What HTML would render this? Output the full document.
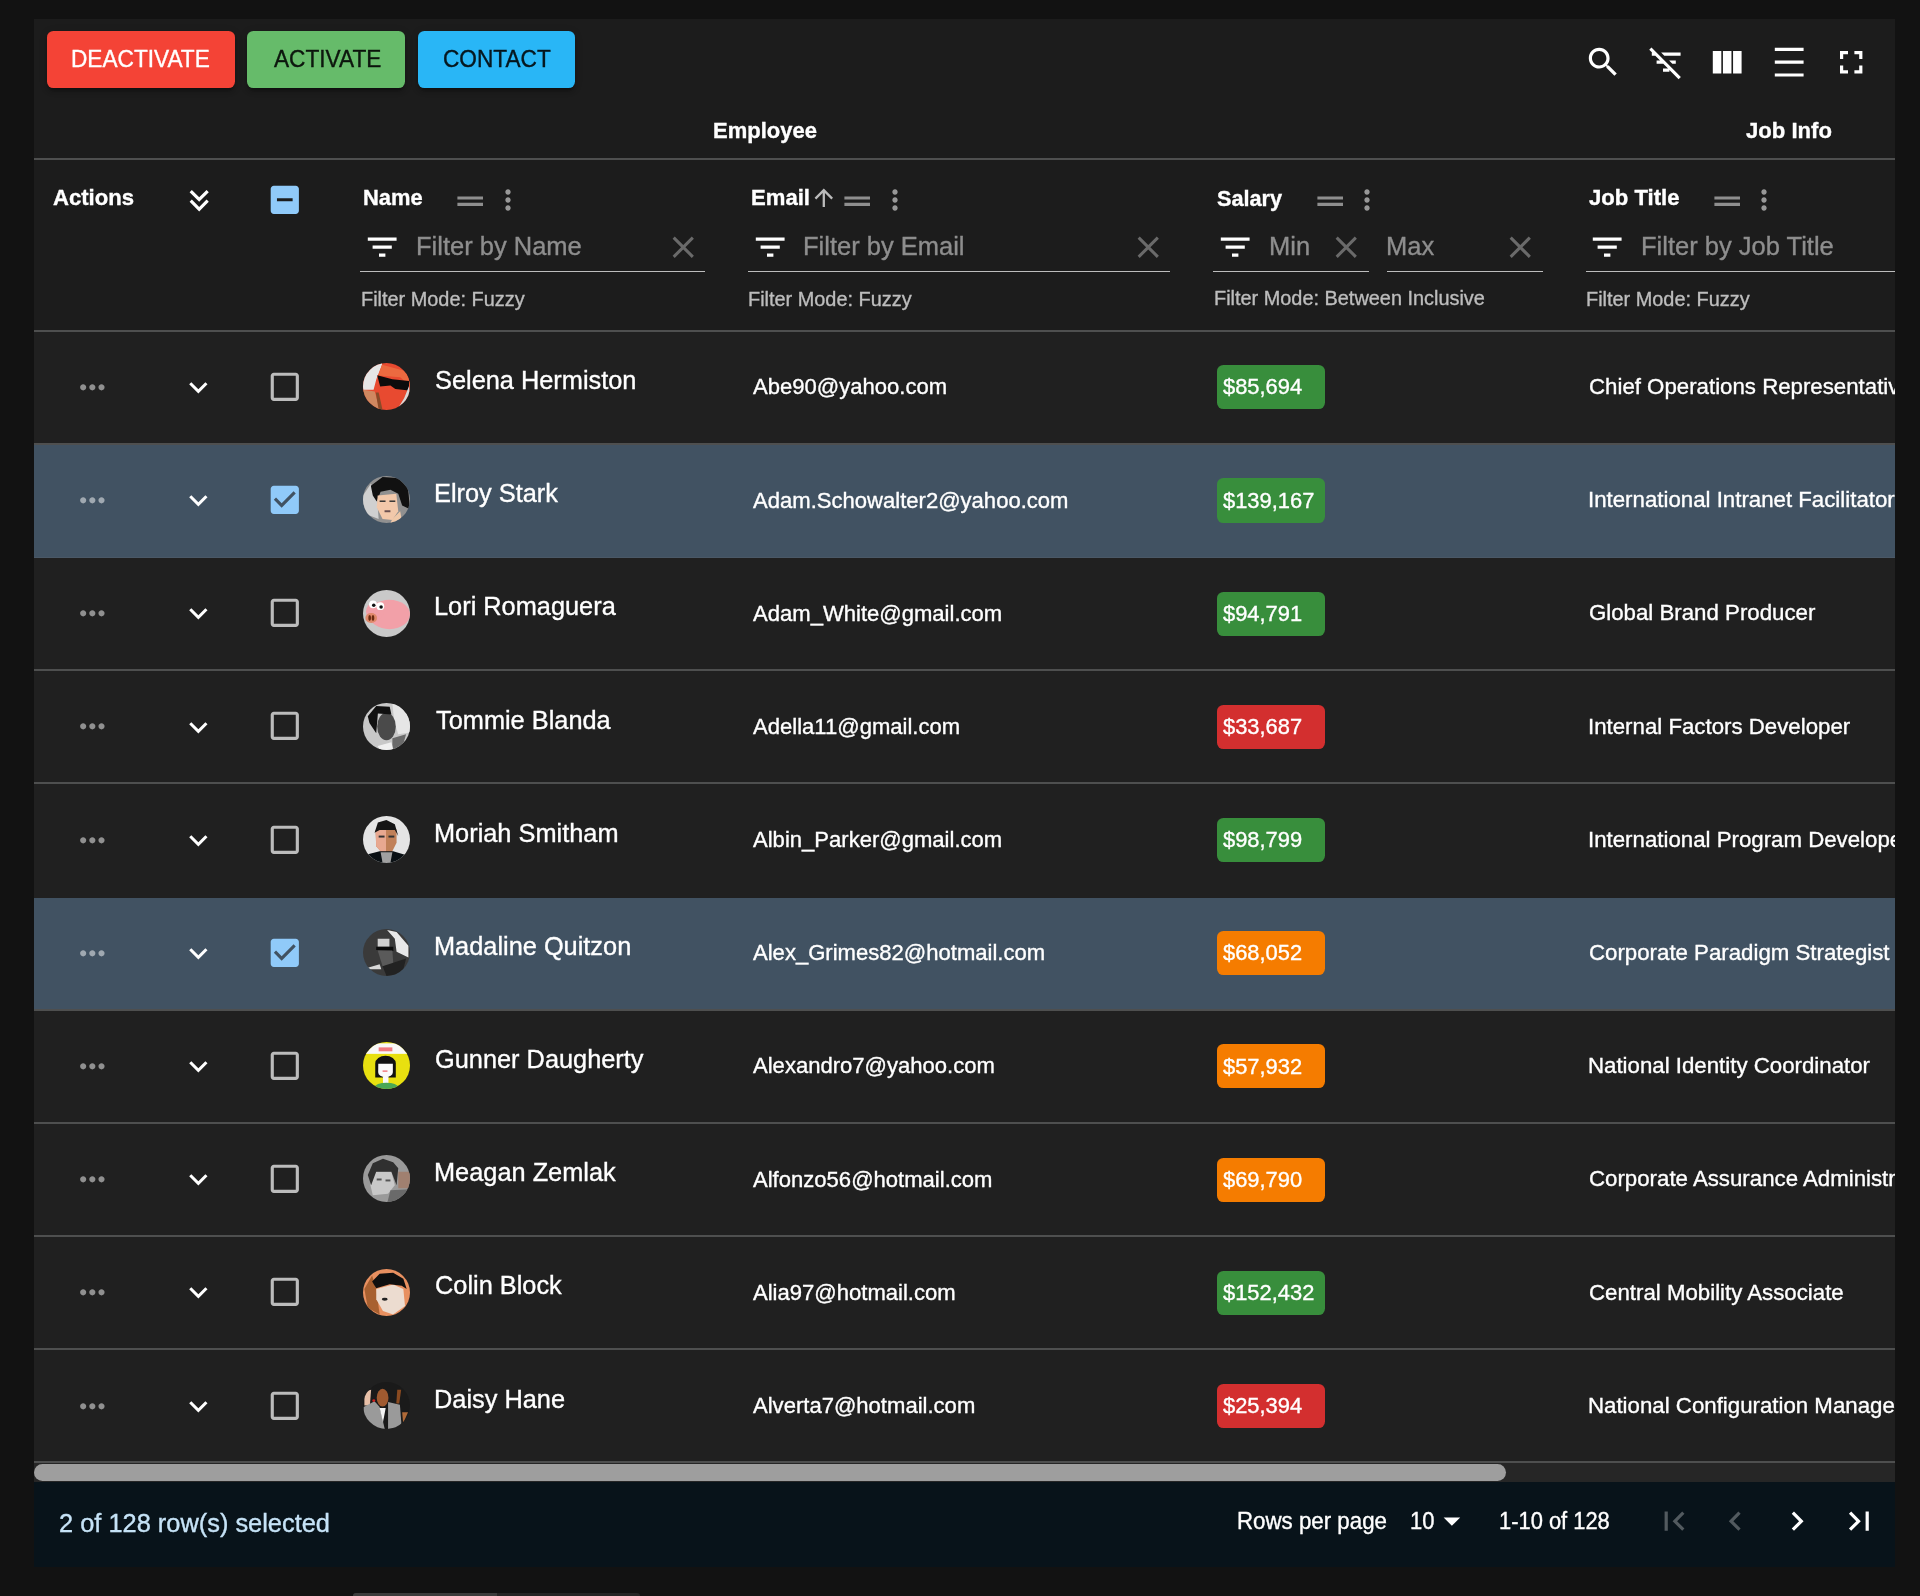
<!DOCTYPE html>
<html><head><meta charset="utf-8"><title>Table</title>
<style>
html,body{margin:0;padding:0;}
body{width:1920px;height:1596px;background:#121212;position:relative;overflow:hidden;font-family:"Liberation Sans",sans-serif;}
#paper{position:absolute;left:34px;top:19px;width:1861px;height:1548px;background:#1c1c1c;overflow:hidden;}
.t{position:absolute;white-space:nowrap;will-change:transform;-webkit-text-stroke:0.35px currentColor;}
.r{position:absolute;}
.i{position:absolute;display:block;overflow:visible;}
#bot{position:absolute;left:353px;top:1593px;width:287px;height:6px;border-radius:4px;background:#252525;overflow:hidden;}
#bot div{position:absolute;left:0;top:0;width:144px;height:6px;background:#3c3c3c;}
</style></head><body>
<div id="paper">
<div class="r" style="left:12.60px;top:12.00px;width:188.40px;height:56.60px;background:#f44336;border-radius:6.4px;box-shadow:0 4.8px 1.6px -3.2px rgba(0,0,0,.2),0 3.2px 3.2px 0 rgba(0,0,0,.14),0 1.6px 8px 0 rgba(0,0,0,.12);"></div>
<div class="t" style="left:37.04px;top:29.13px;font-size:22.65px;line-height:22.65px;color:#fff;transform:scaleY(1.042);transform-origin:0 19.17px;">DEACTIVATE</div>
<div class="r" style="left:212.90px;top:12.00px;width:158.10px;height:56.60px;background:#66bb6a;border-radius:6.4px;box-shadow:0 4.8px 1.6px -3.2px rgba(0,0,0,.2),0 3.2px 3.2px 0 rgba(0,0,0,.14),0 1.6px 8px 0 rgba(0,0,0,.12);"></div>
<div class="t" style="left:239.81px;top:29.13px;font-size:22.65px;line-height:22.65px;color:rgba(0,0,0,0.87);transform:scaleY(1.042);transform-origin:0 19.17px;">ACTIVATE</div>
<div class="r" style="left:384.00px;top:12.00px;width:157.00px;height:56.60px;background:#29b6f6;border-radius:6.4px;box-shadow:0 4.8px 1.6px -3.2px rgba(0,0,0,.2),0 3.2px 3.2px 0 rgba(0,0,0,.14),0 1.6px 8px 0 rgba(0,0,0,.12);"></div>
<div class="t" style="left:408.75px;top:29.13px;font-size:22.65px;line-height:22.65px;color:rgba(0,0,0,0.87);transform:scaleY(1.042);transform-origin:0 19.17px;">CONTACT</div>
<svg class="i" style="left:1550.40px;top:23.70px;width:38.40px;height:38.40px;" viewBox="0 0 24 24"><path fill="#fff" d="M15.5 14h-.79l-.28-.27C15.41 12.59 16 11.11 16 9.5 16 5.91 13.09 3 9.5 3S3 5.91 3 9.5 5.91 16 9.5 16c1.61 0 3.09-.59 4.23-1.57l.27.28v.79l5 4.99L20.49 19l-4.99-5zm-6 0C7.01 14 5 11.99 5 9.5S7.01 5 9.5 5 14 7.01 14 9.5 11.99 14 9.5 14z"/></svg>
<svg class="i" style="left:1612.80px;top:23.70px;width:38.40px;height:38.40px;" viewBox="0 0 24 24"><path fill="#fff" d="M10.83 8H21V6H8.83l2 2zm5 5H18v-2h-4.17l2 2zM14 16.83V18h-4v-2h3.17l-3-3H6v-2h2.17l-3-3H3V6h.17L1.39 4.22 2.8 2.81l18.38 18.38-1.41 1.41L14 16.83z"/></svg>
<svg class="i" style="left:1674.20px;top:23.70px;width:38.40px;height:38.40px;" viewBox="0 0 24 24"><path fill="#fff" d="M14.67 5v14H9.33V5h5.34zm1 14H21V5h-5.33v14zm-7.34 0V5H3v14h5.33z"/></svg>
<svg class="i" style="left:1736.20px;top:23.70px;width:38.40px;height:38.40px;" viewBox="0 0 24 24"><path fill="#fff" d="M3 3h18v2H3zm0 16h18v2H3zm0-8h18v2H3z"/></svg>
<svg class="i" style="left:1798.30px;top:23.70px;width:38.40px;height:38.40px;" viewBox="0 0 24 24"><path fill="#fff" d="M7 14H5v5h5v-2H7v-3zm-2-4h2V7h3V5H5v5zm12 7h-3v2h5v-5h-2v3zM14 5v2h3v3h2V5h-5z"/></svg>
<div class="t" style="left:679.03px;top:101.38px;font-size:22.0px;line-height:22.0px;color:#fff;font-weight:700;transform:scaleY(1.03);transform-origin:0 18.62px;">Employee</div>
<div class="t" style="left:1712.17px;top:101.19px;font-size:22.1px;line-height:22.1px;color:#fff;font-weight:700;transform:scaleY(1.03);transform-origin:0 18.71px;">Job Info</div>
<div class="r" style="left:0.00px;top:139.40px;width:1861.00px;height:1.80px;background:#4e4f4f;"></div>
<div class="t" style="left:18.85px;top:168.19px;font-size:22.1px;line-height:22.1px;color:#fff;font-weight:700;transform:scaleY(1.03);transform-origin:0 18.71px;">Actions</div>
<svg class="i" style="left:145.50px;top:162.50px;width:38.40px;height:38.40px;" viewBox="0 0 24 24"><path fill="#fff" d="M18 6.41 16.59 5 12 9.58 7.41 5 6 6.41l6 6z M18 12.41 16.59 11 12 15.58 7.41 11 6 12.41l6 6z"/></svg>
<svg class="i" style="left:231.85px;top:162.40px;width:37.60px;height:37.60px;" viewBox="0 0 24 24"><path fill="#90caf9" d="M19 3H5c-1.1 0-2 .9-2 2v14c0 1.1.9 2 2 2h14c1.1 0 2-.9 2-2V5c0-1.1-.9-2-2-2zm-2 10H7v-2h10v2z"/></svg>
<div class="t" style="left:329.44px;top:168.46px;font-size:21.9px;line-height:21.9px;color:#fff;font-weight:700;transform:scaleY(1.03);transform-origin:0 18.54px;">Name</div>
<svg class="i" style="left:417.40px;top:162.70px;width:38.40px;height:38.40px;" viewBox="0 0 24 24"><path fill="rgba(255,255,255,0.5)" d="M20 9H4v2h16V9zM4 15h16v-2H4v2z"/></svg>
<svg class="i" style="left:457.80px;top:165.30px;width:32.00px;height:32.00px;" viewBox="0 0 24 24"><path fill="rgba(255,255,255,0.55)" d="M12 8c1.1 0 2-.9 2-2s-.9-2-2-2-2 .9-2 2 .9 2 2 2zm0 2c-1.1 0-2 .9-2 2s.9 2 2 2 2-.9 2-2-.9-2-2-2zm0 6c-1.1 0-2 .9-2 2s.9 2 2 2 2-.9 2-2-.9-2-2-2z"/></svg>
<div class="t" style="left:717.12px;top:168.29px;font-size:22.1px;line-height:22.1px;color:#fff;font-weight:700;transform:scaleY(1.03);transform-origin:0 18.71px;">Email</div>
<svg class="i" style="left:776.40px;top:165.00px;width:27.60px;height:27.60px;" viewBox="0 0 24 24"><path fill="rgba(255,255,255,0.7)" d="M4 12l1.41 1.41L11 7.83V20h2V7.83l5.58 5.59L20 12l-8-8-8 8z"/></svg>
<svg class="i" style="left:803.80px;top:162.70px;width:38.40px;height:38.40px;" viewBox="0 0 24 24"><path fill="rgba(255,255,255,0.5)" d="M20 9H4v2h16V9zM4 15h16v-2H4v2z"/></svg>
<svg class="i" style="left:844.90px;top:165.30px;width:32.00px;height:32.00px;" viewBox="0 0 24 24"><path fill="rgba(255,255,255,0.55)" d="M12 8c1.1 0 2-.9 2-2s-.9-2-2-2-2 .9-2 2 .9 2 2 2zm0 2c-1.1 0-2 .9-2 2s.9 2 2 2 2-.9 2-2-.9-2-2-2zm0 6c-1.1 0-2 .9-2 2s.9 2 2 2 2-.9 2-2-.9-2-2-2z"/></svg>
<div class="t" style="left:1182.87px;top:168.63px;font-size:21.7px;line-height:21.7px;color:#fff;font-weight:700;transform:scaleY(1.03);transform-origin:0 18.37px;">Salary</div>
<svg class="i" style="left:1277.30px;top:162.70px;width:38.40px;height:38.40px;" viewBox="0 0 24 24"><path fill="rgba(255,255,255,0.5)" d="M20 9H4v2h16V9zM4 15h16v-2H4v2z"/></svg>
<svg class="i" style="left:1317.20px;top:165.30px;width:32.00px;height:32.00px;" viewBox="0 0 24 24"><path fill="rgba(255,255,255,0.55)" d="M12 8c1.1 0 2-.9 2-2s-.9-2-2-2-2 .9-2 2 .9 2 2 2zm0 2c-1.1 0-2 .9-2 2s.9 2 2 2 2-.9 2-2-.9-2-2-2zm0 6c-1.1 0-2 .9-2 2s.9 2 2 2 2-.9 2-2-.9-2-2-2z"/></svg>
<div class="t" style="left:1555.17px;top:168.29px;font-size:22.1px;line-height:22.1px;color:#fff;font-weight:700;transform:scaleY(1.03);transform-origin:0 18.71px;">Job Title</div>
<svg class="i" style="left:1673.60px;top:162.70px;width:38.40px;height:38.40px;" viewBox="0 0 24 24"><path fill="rgba(255,255,255,0.5)" d="M20 9H4v2h16V9zM4 15h16v-2H4v2z"/></svg>
<svg class="i" style="left:1714.20px;top:165.30px;width:32.00px;height:32.00px;" viewBox="0 0 24 24"><path fill="rgba(255,255,255,0.55)" d="M12 8c1.1 0 2-.9 2-2s-.9-2-2-2-2 .9-2 2 .9 2 2 2zm0 2c-1.1 0-2 .9-2 2s.9 2 2 2 2-.9 2-2-.9-2-2-2zm0 6c-1.1 0-2 .9-2 2s.9 2 2 2 2-.9 2-2-.9-2-2-2z"/></svg>
<svg class="i" style="left:329.30px;top:209.30px;width:38.40px;height:38.40px;" viewBox="0 0 24 24"><path fill="#fff" d="M10 18h4v-2h-4v2zM3 6v2h18V6H3zm3 7h12v-2H6v2z"/></svg>
<svg class="i" style="left:717.20px;top:209.30px;width:38.40px;height:38.40px;" viewBox="0 0 24 24"><path fill="#fff" d="M10 18h4v-2h-4v2zM3 6v2h18V6H3zm3 7h12v-2H6v2z"/></svg>
<svg class="i" style="left:1182.00px;top:209.30px;width:38.40px;height:38.40px;" viewBox="0 0 24 24"><path fill="#fff" d="M10 18h4v-2h-4v2zM3 6v2h18V6H3zm3 7h12v-2H6v2z"/></svg>
<svg class="i" style="left:1554.40px;top:209.30px;width:38.40px;height:38.40px;" viewBox="0 0 24 24"><path fill="#fff" d="M10 18h4v-2h-4v2zM3 6v2h18V6H3zm3 7h12v-2H6v2z"/></svg>
<div class="t" style="left:381.71px;top:214.51px;font-size:25.5px;line-height:25.5px;color:#8e8e8e;transform:scaleY(1.042);transform-origin:0 21.59px;">Filter by Name</div>
<div class="t" style="left:768.71px;top:214.51px;font-size:25.5px;line-height:25.5px;color:#8e8e8e;transform:scaleY(1.042);transform-origin:0 21.59px;">Filter by Email</div>
<div class="t" style="left:1234.51px;top:214.51px;font-size:25.5px;line-height:25.5px;color:#8e8e8e;transform:scaleY(1.042);transform-origin:0 21.59px;">Min</div>
<div class="t" style="left:1352.21px;top:214.51px;font-size:25.5px;line-height:25.5px;color:#8e8e8e;transform:scaleY(1.042);transform-origin:0 21.59px;">Max</div>
<div class="t" style="left:1606.71px;top:214.51px;font-size:25.5px;line-height:25.5px;color:#8e8e8e;transform:scaleY(1.042);transform-origin:0 21.59px;">Filter by Job Title</div>
<svg class="i" style="left:630.85px;top:210.00px;width:36.50px;height:36.50px;" viewBox="0 0 24 24"><path fill="#6a6a6a" d="M19 6.41 17.59 5 12 10.59 6.41 5 5 6.41 10.59 12 5 17.59 6.41 19 12 13.41 17.59 19 19 17.59 13.41 12z"/></svg>
<svg class="i" style="left:1096.15px;top:210.00px;width:36.50px;height:36.50px;" viewBox="0 0 24 24"><path fill="#6a6a6a" d="M19 6.41 17.59 5 12 10.59 6.41 5 5 6.41 10.59 12 5 17.59 6.41 19 12 13.41 17.59 19 19 17.59 13.41 12z"/></svg>
<svg class="i" style="left:1294.20px;top:210.00px;width:36.50px;height:36.50px;" viewBox="0 0 24 24"><path fill="#6a6a6a" d="M19 6.41 17.59 5 12 10.59 6.41 5 5 6.41 10.59 12 5 17.59 6.41 19 12 13.41 17.59 19 19 17.59 13.41 12z"/></svg>
<svg class="i" style="left:1468.35px;top:210.00px;width:36.50px;height:36.50px;" viewBox="0 0 24 24"><path fill="#6a6a6a" d="M19 6.41 17.59 5 12 10.59 6.41 5 5 6.41 10.59 12 5 17.59 6.41 19 12 13.41 17.59 19 19 17.59 13.41 12z"/></svg>
<div class="r" style="left:325.80px;top:251.60px;width:345.40px;height:1.80px;background:#bdbdbd;"></div>
<div class="r" style="left:714.20px;top:251.60px;width:422.00px;height:1.80px;background:#bdbdbd;"></div>
<div class="r" style="left:1179.00px;top:251.60px;width:155.75px;height:1.80px;background:#bdbdbd;"></div>
<div class="r" style="left:1353.20px;top:251.60px;width:155.70px;height:1.80px;background:#bdbdbd;"></div>
<div class="r" style="left:1551.50px;top:251.60px;width:314.50px;height:1.80px;background:#bdbdbd;"></div>
<div class="t" style="left:326.77px;top:270.55px;font-size:19.9px;line-height:19.9px;color:#bdbdbd;transform:scaleY(1.042);transform-origin:0 16.85px;">Filter Mode: Fuzzy</div>
<div class="t" style="left:714.17px;top:270.55px;font-size:19.9px;line-height:19.9px;color:#bdbdbd;transform:scaleY(1.042);transform-origin:0 16.85px;">Filter Mode: Fuzzy</div>
<div class="t" style="left:1180.17px;top:270.35px;font-size:19.9px;line-height:19.9px;color:#bdbdbd;transform:scaleY(1.042);transform-origin:0 16.85px;">Filter Mode: Between Inclusive</div>
<div class="t" style="left:1552.27px;top:270.55px;font-size:19.9px;line-height:19.9px;color:#bdbdbd;transform:scaleY(1.042);transform-origin:0 16.85px;">Filter Mode: Fuzzy</div>
<div class="r" style="left:0.00px;top:311.00px;width:1861.00px;height:1132.30px;background:#202020;"></div>
<div class="r" style="left:0.00px;top:310.70px;width:1861.00px;height:2.10px;background:#4e4f4f;"></div>
<div class="r" style="left:0.00px;top:423.60px;width:1861.00px;height:2.20px;background:#4e4f4f;"></div>
<svg class="i" style="left:40.15px;top:349.95px;width:36.70px;height:36.70px;" viewBox="0 0 24 24"><path fill="rgba(255,255,255,0.5)" d="M6 10c-1.1 0-2 .9-2 2s.9 2 2 2 2-.9 2-2-.9-2-2-2zm12 0c-1.1 0-2 .9-2 2s.9 2 2 2 2-.9 2-2-.9-2-2-2zm-6 0c-1.1 0-2 .9-2 2s.9 2 2 2 2-.9 2-2-.9-2-2-2z"/></svg>
<svg class="i" style="left:146.15px;top:350.05px;width:36.70px;height:36.70px;" viewBox="0 0 24 24"><path fill="#fff" d="M16.59 8.59 12 13.17 7.41 8.59 6 10l6 6 6-6z"/></svg>
<svg class="i" style="left:232.10px;top:348.90px;width:37.60px;height:37.60px;" viewBox="0 0 24 24"><path fill="rgba(255,255,255,0.7)" d="M19 5v14H5V5h14m0-2H5c-1.11 0-2 .9-2 2v14c0 1.1.89 2 2 2h14c1.1 0 2-.9 2-2V5c0-1.1-.9-2-2-2z"/></svg>
<svg class="i" style="left:329.20px;top:344.20px;width:47.0px;height:47.0px" viewBox="0 0 48 48"><defs><clipPath id="c0"><circle cx="24" cy="24" r="24"/></clipPath></defs><g clip-path="url(#c0)"><rect width="48" height="48" fill="#e84a30"/><polygon points="19.4,-1 0,-1 0,27.2 10.8,27.2 13.7,16.3 19.4,1.8" fill="#e6e6e6"/><polygon points="0,27.2 12,29 17.5,48 0,48" fill="#d08860"/><polygon points="13,30 16,30 20,48 16,48" fill="#8a4a28"/><polygon points="19.4,1.8 46,9 48,23.5 38,14.5 15.6,12.7" fill="#ec6a40"/><polygon points="14.5,12.5 30,16.5 47,18.5 47,28 33,26.5 28,23 17.5,24" fill="#0c0c0c"/><polygon points="47,23.5 48,32.6 48,48 36.5,45 42,36" fill="#d8d8d8"/></g></svg>
<div class="t" style="left:400.95px;top:349.04px;font-size:25.35px;line-height:25.35px;color:#fff;transform:scaleY(1.042);transform-origin:0 21.46px;">Selena Hermiston</div>
<div class="t" style="left:719.06px;top:357.32px;font-size:22.07px;line-height:22.07px;color:#fff;transform:scaleY(1.03);transform-origin:0 18.68px;">Abe90@yahoo.com</div>
<div class="r" style="left:1183.00px;top:346.25px;width:108.20px;height:44.10px;background:#388e3c;border-radius:6.4px;"></div>
<div class="t" style="left:1189.26px;top:357.46px;font-size:21.9px;line-height:21.9px;color:#fff;transform:scaleY(1.03);transform-origin:0 18.54px;">$85,694</div>
<div class="t" style="left:1554.67px;top:357.07px;font-size:22.25px;line-height:22.25px;color:#fff;transform:scaleY(1.03);transform-origin:0 18.83px;white-space:nowrap;">Chief Operations Representative</div>
<div class="r" style="left:0.00px;top:425.98px;width:1861.00px;height:113.00px;background:#415262;"></div>
<div class="r" style="left:0.00px;top:537.78px;width:1861.00px;height:1.20px;background:#4a5866;"></div>
<svg class="i" style="left:40.15px;top:463.13px;width:36.70px;height:36.70px;" viewBox="0 0 24 24"><path fill="rgba(255,255,255,0.5)" d="M6 10c-1.1 0-2 .9-2 2s.9 2 2 2 2-.9 2-2-.9-2-2-2zm12 0c-1.1 0-2 .9-2 2s.9 2 2 2 2-.9 2-2-.9-2-2-2zm-6 0c-1.1 0-2 .9-2 2s.9 2 2 2 2-.9 2-2-.9-2-2-2z"/></svg>
<svg class="i" style="left:146.15px;top:463.23px;width:36.70px;height:36.70px;" viewBox="0 0 24 24"><path fill="#fff" d="M16.59 8.59 12 13.17 7.41 8.59 6 10l6 6 6-6z"/></svg>
<svg class="i" style="left:232.10px;top:462.08px;width:37.60px;height:37.60px;" viewBox="0 0 24 24"><path fill="#90caf9" d="M19 3H5c-1.11 0-2 .9-2 2v14c0 1.1.89 2 2 2h14c1.11 0 2-.9 2-2V5c0-1.1-.89-2-2-2zm-9 14l-5-5 1.41-1.41L10 14.17l7.59-7.59L19 8l-9 9z"/></svg>
<svg class="i" style="left:329.20px;top:457.38px;width:47.0px;height:47.0px" viewBox="0 0 48 48"><defs><clipPath id="c1"><circle cx="24" cy="24" r="24"/></clipPath></defs><g clip-path="url(#c1)"><rect width="48" height="48" fill="#909090"/><polygon points="0,20 8,8 14,18 16,44 6,40 0,36" fill="#d0d0d0"/><polygon points="8,10 20,1 36,2 46,12 48,34 40,30 36,18 28,14 18,16 14,26 10,20" fill="#111"/><polygon points="15,20 34,18 36,36 30,45 20,44 14,32" fill="#f2c8aa"/><rect x="17" y="25" width="6" height="1.5" fill="#333"/><rect x="27" y="25" width="6" height="1.5" fill="#333"/><rect x="22" y="35" width="6" height="2" fill="#6a5050"/><polygon points="30,44 38,36 40,48 28,48" fill="#f0c8a8"/></g></svg>
<div class="t" style="left:400.02px;top:462.22px;font-size:25.35px;line-height:25.35px;color:#fff;transform:scaleY(1.042);transform-origin:0 21.46px;">Elroy Stark</div>
<div class="t" style="left:719.06px;top:470.50px;font-size:22.07px;line-height:22.07px;color:#fff;transform:scaleY(1.03);transform-origin:0 18.68px;">Adam.Schowalter2@yahoo.com</div>
<div class="r" style="left:1183.00px;top:459.43px;width:108.20px;height:44.10px;background:#388e3c;border-radius:6.4px;"></div>
<div class="t" style="left:1189.26px;top:470.64px;font-size:21.9px;line-height:21.9px;color:#fff;transform:scaleY(1.03);transform-origin:0 18.54px;">$139,167</div>
<div class="t" style="left:1553.75px;top:470.25px;font-size:22.25px;line-height:22.25px;color:#fff;transform:scaleY(1.03);transform-origin:0 18.83px;white-space:nowrap;">International Intranet Facilitator</div>
<div class="r" style="left:0.00px;top:649.96px;width:1861.00px;height:2.20px;background:#4e4f4f;"></div>
<svg class="i" style="left:40.15px;top:576.31px;width:36.70px;height:36.70px;" viewBox="0 0 24 24"><path fill="rgba(255,255,255,0.5)" d="M6 10c-1.1 0-2 .9-2 2s.9 2 2 2 2-.9 2-2-.9-2-2-2zm12 0c-1.1 0-2 .9-2 2s.9 2 2 2 2-.9 2-2-.9-2-2-2zm-6 0c-1.1 0-2 .9-2 2s.9 2 2 2 2-.9 2-2-.9-2-2-2z"/></svg>
<svg class="i" style="left:146.15px;top:576.41px;width:36.70px;height:36.70px;" viewBox="0 0 24 24"><path fill="#fff" d="M16.59 8.59 12 13.17 7.41 8.59 6 10l6 6 6-6z"/></svg>
<svg class="i" style="left:232.10px;top:575.26px;width:37.60px;height:37.60px;" viewBox="0 0 24 24"><path fill="rgba(255,255,255,0.7)" d="M19 5v14H5V5h14m0-2H5c-1.11 0-2 .9-2 2v14c0 1.1.89 2 2 2h14c1.1 0 2-.9 2-2V5c0-1.1-.9-2-2-2z"/></svg>
<svg class="i" style="left:329.20px;top:570.56px;width:47.0px;height:47.0px" viewBox="0 0 48 48"><defs><clipPath id="c2"><circle cx="24" cy="24" r="24"/></clipPath></defs><g clip-path="url(#c2)"><rect width="48" height="48" fill="#c9c9c9"/><ellipse cx="27" cy="25" rx="21" ry="15" fill="#f2a0a8"/><ellipse cx="12" cy="22" rx="9" ry="9" fill="#f2a0a8"/><ellipse cx="8.4" cy="28.6" rx="6" ry="5" fill="#e0886a"/><ellipse cx="6.8" cy="28.6" rx="1.4" ry="3" fill="#6a2a10"/><ellipse cx="10.2" cy="28.6" rx="1.4" ry="3" fill="#6a2a10"/><circle cx="10.2" cy="14.6" r="4" fill="#fff"/><circle cx="17.7" cy="16.5" r="4" fill="#fff"/><circle cx="11" cy="15.5" r="1.8" fill="#111"/><circle cx="18.5" cy="17.4" r="1.8" fill="#111"/></g></svg>
<div class="t" style="left:400.02px;top:575.40px;font-size:25.35px;line-height:25.35px;color:#fff;transform:scaleY(1.042);transform-origin:0 21.46px;">Lori Romaguera</div>
<div class="t" style="left:719.06px;top:583.68px;font-size:22.07px;line-height:22.07px;color:#fff;transform:scaleY(1.03);transform-origin:0 18.68px;">Adam_White@gmail.com</div>
<div class="r" style="left:1183.00px;top:572.61px;width:108.20px;height:44.10px;background:#388e3c;border-radius:6.4px;"></div>
<div class="t" style="left:1189.26px;top:583.82px;font-size:21.9px;line-height:21.9px;color:#fff;transform:scaleY(1.03);transform-origin:0 18.54px;">$94,791</div>
<div class="t" style="left:1554.68px;top:583.43px;font-size:22.25px;line-height:22.25px;color:#fff;transform:scaleY(1.03);transform-origin:0 18.83px;white-space:nowrap;">Global Brand Producer</div>
<div class="r" style="left:0.00px;top:763.14px;width:1861.00px;height:2.20px;background:#4e4f4f;"></div>
<svg class="i" style="left:40.15px;top:689.49px;width:36.70px;height:36.70px;" viewBox="0 0 24 24"><path fill="rgba(255,255,255,0.5)" d="M6 10c-1.1 0-2 .9-2 2s.9 2 2 2 2-.9 2-2-.9-2-2-2zm12 0c-1.1 0-2 .9-2 2s.9 2 2 2 2-.9 2-2-.9-2-2-2zm-6 0c-1.1 0-2 .9-2 2s.9 2 2 2 2-.9 2-2-.9-2-2-2z"/></svg>
<svg class="i" style="left:146.15px;top:689.59px;width:36.70px;height:36.70px;" viewBox="0 0 24 24"><path fill="#fff" d="M16.59 8.59 12 13.17 7.41 8.59 6 10l6 6 6-6z"/></svg>
<svg class="i" style="left:232.10px;top:688.44px;width:37.60px;height:37.60px;" viewBox="0 0 24 24"><path fill="rgba(255,255,255,0.7)" d="M19 5v14H5V5h14m0-2H5c-1.11 0-2 .9-2 2v14c0 1.1.89 2 2 2h14c1.1 0 2-.9 2-2V5c0-1.1-.9-2-2-2z"/></svg>
<svg class="i" style="left:329.20px;top:683.74px;width:47.0px;height:47.0px" viewBox="0 0 48 48"><defs><clipPath id="c3"><circle cx="24" cy="24" r="24"/></clipPath></defs><g clip-path="url(#c3)"><rect width="48" height="48" fill="#c8c8c8"/><polygon points="30,0 48,0 48,30 36,32 32,20" fill="#e6e6e6"/><ellipse cx="24" cy="24" rx="9.5" ry="14" fill="#4a4a4a"/><polygon points="4.9,13.5 13.5,3.1 27.3,3.8 29,11.8 15.2,10.7 13.5,30.8 6.6,20.4" fill="#101010"/><polygon points="30,36 44,32 40,46 30,48" fill="#6a6a6a"/><polygon points="15,44 29,40 31,48 17,48" fill="#f0f0f0"/></g></svg>
<div class="t" style="left:401.53px;top:688.58px;font-size:25.35px;line-height:25.35px;color:#fff;transform:scaleY(1.042);transform-origin:0 21.46px;">Tommie Blanda</div>
<div class="t" style="left:719.06px;top:696.86px;font-size:22.07px;line-height:22.07px;color:#fff;transform:scaleY(1.03);transform-origin:0 18.68px;">Adella11@gmail.com</div>
<div class="r" style="left:1183.00px;top:685.79px;width:108.20px;height:44.10px;background:#d32f2f;border-radius:6.4px;"></div>
<div class="t" style="left:1189.26px;top:697.00px;font-size:21.9px;line-height:21.9px;color:#fff;transform:scaleY(1.03);transform-origin:0 18.54px;">$33,687</div>
<div class="t" style="left:1553.75px;top:696.61px;font-size:22.25px;line-height:22.25px;color:#fff;transform:scaleY(1.03);transform-origin:0 18.83px;white-space:nowrap;">Internal Factors Developer</div>
<svg class="i" style="left:40.15px;top:802.67px;width:36.70px;height:36.70px;" viewBox="0 0 24 24"><path fill="rgba(255,255,255,0.5)" d="M6 10c-1.1 0-2 .9-2 2s.9 2 2 2 2-.9 2-2-.9-2-2-2zm12 0c-1.1 0-2 .9-2 2s.9 2 2 2 2-.9 2-2-.9-2-2-2zm-6 0c-1.1 0-2 .9-2 2s.9 2 2 2 2-.9 2-2-.9-2-2-2z"/></svg>
<svg class="i" style="left:146.15px;top:802.77px;width:36.70px;height:36.70px;" viewBox="0 0 24 24"><path fill="#fff" d="M16.59 8.59 12 13.17 7.41 8.59 6 10l6 6 6-6z"/></svg>
<svg class="i" style="left:232.10px;top:801.62px;width:37.60px;height:37.60px;" viewBox="0 0 24 24"><path fill="rgba(255,255,255,0.7)" d="M19 5v14H5V5h14m0-2H5c-1.11 0-2 .9-2 2v14c0 1.1.89 2 2 2h14c1.1 0 2-.9 2-2V5c0-1.1-.9-2-2-2z"/></svg>
<svg class="i" style="left:329.20px;top:796.92px;width:47.0px;height:47.0px" viewBox="0 0 48 48"><defs><clipPath id="c4"><circle cx="24" cy="24" r="24"/></clipPath></defs><g clip-path="url(#c4)"><rect width="48" height="48" fill="#e4e4e4"/><polygon points="12.8,14.2 34.3,13.5 34.3,27.3 29,37.7 20.4,38.8 13.5,30.8" fill="#c08058"/><polygon points="12.8,14.2 23.5,14 23.5,38.5 20.4,38.8 13.5,30.8" fill="#e8a890"/><polygon points="11.8,17 15.2,6.6 23.9,4.2 32.5,8.3 36,20.4 32.5,14.2 17,14.2" fill="#151515"/><rect x="16" y="20" width="6" height="2" fill="#333"/><rect x="26" y="20" width="6" height="2" fill="#333"/><polygon points="-4,48 3.1,39.5 17,36 30.8,36 42.9,39.5 48,48" fill="#0a1014"/><polygon points="18,37 30,37 28,48 20,48" fill="#a0a0a0"/></g></svg>
<div class="t" style="left:400.02px;top:801.76px;font-size:25.35px;line-height:25.35px;color:#fff;transform:scaleY(1.042);transform-origin:0 21.46px;">Moriah Smitham</div>
<div class="t" style="left:719.06px;top:810.04px;font-size:22.07px;line-height:22.07px;color:#fff;transform:scaleY(1.03);transform-origin:0 18.68px;">Albin_Parker@gmail.com</div>
<div class="r" style="left:1183.00px;top:798.97px;width:108.20px;height:44.10px;background:#388e3c;border-radius:6.4px;"></div>
<div class="t" style="left:1189.26px;top:810.18px;font-size:21.9px;line-height:21.9px;color:#fff;transform:scaleY(1.03);transform-origin:0 18.54px;">$98,799</div>
<div class="t" style="left:1553.75px;top:809.79px;font-size:22.25px;line-height:22.25px;color:#fff;transform:scaleY(1.03);transform-origin:0 18.83px;white-space:nowrap;">International Program Developer</div>
<div class="r" style="left:0.00px;top:878.70px;width:1861.00px;height:113.00px;background:#415262;"></div>
<div class="r" style="left:0.00px;top:989.50px;width:1861.00px;height:2.20px;background:#4e4f4f;"></div>
<svg class="i" style="left:40.15px;top:915.85px;width:36.70px;height:36.70px;" viewBox="0 0 24 24"><path fill="rgba(255,255,255,0.5)" d="M6 10c-1.1 0-2 .9-2 2s.9 2 2 2 2-.9 2-2-.9-2-2-2zm12 0c-1.1 0-2 .9-2 2s.9 2 2 2 2-.9 2-2-.9-2-2-2zm-6 0c-1.1 0-2 .9-2 2s.9 2 2 2 2-.9 2-2-.9-2-2-2z"/></svg>
<svg class="i" style="left:146.15px;top:915.95px;width:36.70px;height:36.70px;" viewBox="0 0 24 24"><path fill="#fff" d="M16.59 8.59 12 13.17 7.41 8.59 6 10l6 6 6-6z"/></svg>
<svg class="i" style="left:232.10px;top:914.80px;width:37.60px;height:37.60px;" viewBox="0 0 24 24"><path fill="#90caf9" d="M19 3H5c-1.11 0-2 .9-2 2v14c0 1.1.89 2 2 2h14c1.11 0 2-.9 2-2V5c0-1.1-.89-2-2-2zm-9 14l-5-5 1.41-1.41L10 14.17l7.59-7.59L19 8l-9 9z"/></svg>
<svg class="i" style="left:329.20px;top:910.10px;width:47.0px;height:47.0px" viewBox="0 0 48 48"><defs><clipPath id="c5"><circle cx="24" cy="24" r="24"/></clipPath></defs><g clip-path="url(#c5)"><rect width="48" height="48" fill="#3a3a3a"/><polygon points="24.6,1 34.3,3.1 46.4,17 46.4,29 34.3,23.2 32.5,10" fill="#e8e8e8"/><polygon points="15,10 27,10 27,18 15,18" fill="#d0d0d0"/><polygon points="13.5,18 31,18 31,22.5 13.5,21.5" fill="#0a0a0a"/><polygon points="15,22 30,22 31,36 20,38" fill="#5a5a5a"/><polygon points="4.9,39.5 17,36 18.7,41 6.6,41.2" fill="#d8d8d8"/><polygon points="20,38 44,30 40,46 24,48" fill="#222"/></g></svg>
<div class="t" style="left:400.02px;top:914.94px;font-size:25.35px;line-height:25.35px;color:#fff;transform:scaleY(1.042);transform-origin:0 21.46px;">Madaline Quitzon</div>
<div class="t" style="left:719.06px;top:923.22px;font-size:22.07px;line-height:22.07px;color:#fff;transform:scaleY(1.03);transform-origin:0 18.68px;">Alex_Grimes82@hotmail.com</div>
<div class="r" style="left:1183.00px;top:912.15px;width:108.20px;height:44.10px;background:#f57c00;border-radius:6.4px;"></div>
<div class="t" style="left:1189.26px;top:923.36px;font-size:21.9px;line-height:21.9px;color:#fff;transform:scaleY(1.03);transform-origin:0 18.54px;">$68,052</div>
<div class="t" style="left:1554.67px;top:922.97px;font-size:22.25px;line-height:22.25px;color:#fff;transform:scaleY(1.03);transform-origin:0 18.83px;white-space:nowrap;">Corporate Paradigm Strategist</div>
<div class="r" style="left:0.00px;top:1102.68px;width:1861.00px;height:2.20px;background:#4e4f4f;"></div>
<svg class="i" style="left:40.15px;top:1029.03px;width:36.70px;height:36.70px;" viewBox="0 0 24 24"><path fill="rgba(255,255,255,0.5)" d="M6 10c-1.1 0-2 .9-2 2s.9 2 2 2 2-.9 2-2-.9-2-2-2zm12 0c-1.1 0-2 .9-2 2s.9 2 2 2 2-.9 2-2-.9-2-2-2zm-6 0c-1.1 0-2 .9-2 2s.9 2 2 2 2-.9 2-2-.9-2-2-2z"/></svg>
<svg class="i" style="left:146.15px;top:1029.13px;width:36.70px;height:36.70px;" viewBox="0 0 24 24"><path fill="#fff" d="M16.59 8.59 12 13.17 7.41 8.59 6 10l6 6 6-6z"/></svg>
<svg class="i" style="left:232.10px;top:1027.98px;width:37.60px;height:37.60px;" viewBox="0 0 24 24"><path fill="rgba(255,255,255,0.7)" d="M19 5v14H5V5h14m0-2H5c-1.11 0-2 .9-2 2v14c0 1.1.89 2 2 2h14c1.1 0 2-.9 2-2V5c0-1.1-.9-2-2-2z"/></svg>
<svg class="i" style="left:329.20px;top:1023.28px;width:47.0px;height:47.0px" viewBox="0 0 48 48"><defs><clipPath id="c6"><circle cx="24" cy="24" r="24"/></clipPath></defs><g clip-path="url(#c6)"><rect width="48" height="48" fill="#e8e010"/><rect x="0" y="1.4" width="48" height="10.7" fill="#f8f8f8"/><rect x="16" y="5.5" width="14" height="4" fill="#f07a80"/><path d="M12.5,36.3V22a10.5,8 0 0 1 21,0V36.3z" fill="#111"/><path d="M15.6,22.2H30.5V31a7.5,5 0 0 1 -15,0z" fill="#fafafa"/><rect x="20.4" y="35" width="5.6" height="7.2" fill="#fafafa"/><rect x="20" y="29" width="5" height="1.5" fill="#f07a80"/><ellipse cx="23.9" cy="46" rx="12" ry="4.5" fill="#4aa855"/></g></svg>
<div class="t" style="left:400.83px;top:1028.12px;font-size:25.35px;line-height:25.35px;color:#fff;transform:scaleY(1.042);transform-origin:0 21.46px;">Gunner Daugherty</div>
<div class="t" style="left:719.06px;top:1036.40px;font-size:22.07px;line-height:22.07px;color:#fff;transform:scaleY(1.03);transform-origin:0 18.68px;">Alexandro7@yahoo.com</div>
<div class="r" style="left:1183.00px;top:1025.33px;width:108.20px;height:44.10px;background:#f57c00;border-radius:6.4px;"></div>
<div class="t" style="left:1189.26px;top:1036.54px;font-size:21.9px;line-height:21.9px;color:#fff;transform:scaleY(1.03);transform-origin:0 18.54px;">$57,932</div>
<div class="t" style="left:1553.97px;top:1036.15px;font-size:22.25px;line-height:22.25px;color:#fff;transform:scaleY(1.03);transform-origin:0 18.83px;white-space:nowrap;">National Identity Coordinator</div>
<div class="r" style="left:0.00px;top:1215.86px;width:1861.00px;height:2.20px;background:#4e4f4f;"></div>
<svg class="i" style="left:40.15px;top:1142.21px;width:36.70px;height:36.70px;" viewBox="0 0 24 24"><path fill="rgba(255,255,255,0.5)" d="M6 10c-1.1 0-2 .9-2 2s.9 2 2 2 2-.9 2-2-.9-2-2-2zm12 0c-1.1 0-2 .9-2 2s.9 2 2 2 2-.9 2-2-.9-2-2-2zm-6 0c-1.1 0-2 .9-2 2s.9 2 2 2 2-.9 2-2-.9-2-2-2z"/></svg>
<svg class="i" style="left:146.15px;top:1142.31px;width:36.70px;height:36.70px;" viewBox="0 0 24 24"><path fill="#fff" d="M16.59 8.59 12 13.17 7.41 8.59 6 10l6 6 6-6z"/></svg>
<svg class="i" style="left:232.10px;top:1141.16px;width:37.60px;height:37.60px;" viewBox="0 0 24 24"><path fill="rgba(255,255,255,0.7)" d="M19 5v14H5V5h14m0-2H5c-1.11 0-2 .9-2 2v14c0 1.1.89 2 2 2h14c1.1 0 2-.9 2-2V5c0-1.1-.9-2-2-2z"/></svg>
<svg class="i" style="left:329.20px;top:1136.46px;width:47.0px;height:47.0px" viewBox="0 0 48 48"><defs><clipPath id="c7"><circle cx="24" cy="24" r="24"/></clipPath></defs><g clip-path="url(#c7)"><rect width="48" height="48" fill="#9a9a9a"/><polygon points="36,17 48,17 48,34 36,34" fill="#a08070"/><polygon points="8.3,17 29,17 32.5,30.8 25.6,39.5 10,41.2 7.6,30.8" fill="#c8c8c8"/><polygon points="4.9,20.4 10,8.3 20.4,3.8 30.8,7.3 36,13.5 34.3,30.8 29,17 13.5,17 8.3,30.8" fill="#303030"/><rect x="14" y="24" width="5" height="2" fill="#555"/><rect x="23" y="25" width="5" height="2" fill="#555"/><polygon points="28,36 48,35 48,48 25,48" fill="#6a6a6a"/></g></svg>
<div class="t" style="left:400.02px;top:1141.30px;font-size:25.35px;line-height:25.35px;color:#fff;transform:scaleY(1.042);transform-origin:0 21.46px;">Meagan Zemlak</div>
<div class="t" style="left:719.06px;top:1149.58px;font-size:22.07px;line-height:22.07px;color:#fff;transform:scaleY(1.03);transform-origin:0 18.68px;">Alfonzo56@hotmail.com</div>
<div class="r" style="left:1183.00px;top:1138.51px;width:108.20px;height:44.10px;background:#f57c00;border-radius:6.4px;"></div>
<div class="t" style="left:1189.26px;top:1149.72px;font-size:21.9px;line-height:21.9px;color:#fff;transform:scaleY(1.03);transform-origin:0 18.54px;">$69,790</div>
<div class="t" style="left:1554.67px;top:1149.33px;font-size:22.25px;line-height:22.25px;color:#fff;transform:scaleY(1.03);transform-origin:0 18.83px;white-space:nowrap;">Corporate Assurance Administrator</div>
<div class="r" style="left:0.00px;top:1329.04px;width:1861.00px;height:2.20px;background:#4e4f4f;"></div>
<svg class="i" style="left:40.15px;top:1255.39px;width:36.70px;height:36.70px;" viewBox="0 0 24 24"><path fill="rgba(255,255,255,0.5)" d="M6 10c-1.1 0-2 .9-2 2s.9 2 2 2 2-.9 2-2-.9-2-2-2zm12 0c-1.1 0-2 .9-2 2s.9 2 2 2 2-.9 2-2-.9-2-2-2zm-6 0c-1.1 0-2 .9-2 2s.9 2 2 2 2-.9 2-2-.9-2-2-2z"/></svg>
<svg class="i" style="left:146.15px;top:1255.49px;width:36.70px;height:36.70px;" viewBox="0 0 24 24"><path fill="#fff" d="M16.59 8.59 12 13.17 7.41 8.59 6 10l6 6 6-6z"/></svg>
<svg class="i" style="left:232.10px;top:1254.34px;width:37.60px;height:37.60px;" viewBox="0 0 24 24"><path fill="rgba(255,255,255,0.7)" d="M19 5v14H5V5h14m0-2H5c-1.11 0-2 .9-2 2v14c0 1.1.89 2 2 2h14c1.1 0 2-.9 2-2V5c0-1.1-.9-2-2-2z"/></svg>
<svg class="i" style="left:329.20px;top:1249.64px;width:47.0px;height:47.0px" viewBox="0 0 48 48"><defs><clipPath id="c8"><circle cx="24" cy="24" r="24"/></clipPath></defs><g clip-path="url(#c8)"><rect width="48" height="48" fill="#e89060"/><polygon points="1.4,20.4 9.3,6.6 13.5,20.4 17,46.4 4.9,39.5" fill="#a86030"/><polygon points="13.5,20.4 30.8,15.9 41.2,20.4 42.9,37.7 30.8,46.4 20.4,42.9 13.5,30.8" fill="#ecdcd0"/><polygon points="9.3,12.8 17,4.9 30.8,3.8 41.2,10 44.6,20.4 39.5,17 27.3,15.6 13.5,19.7" fill="#101010"/><ellipse cx="22.2" cy="30.8" rx="3" ry="1.5" fill="#222"/></g></svg>
<div class="t" style="left:400.81px;top:1254.48px;font-size:25.35px;line-height:25.35px;color:#fff;transform:scaleY(1.042);transform-origin:0 21.46px;">Colin Block</div>
<div class="t" style="left:719.06px;top:1262.76px;font-size:22.07px;line-height:22.07px;color:#fff;transform:scaleY(1.03);transform-origin:0 18.68px;">Alia97@hotmail.com</div>
<div class="r" style="left:1183.00px;top:1251.69px;width:108.20px;height:44.10px;background:#388e3c;border-radius:6.4px;"></div>
<div class="t" style="left:1189.26px;top:1262.90px;font-size:21.9px;line-height:21.9px;color:#fff;transform:scaleY(1.03);transform-origin:0 18.54px;">$152,432</div>
<div class="t" style="left:1554.67px;top:1262.51px;font-size:22.25px;line-height:22.25px;color:#fff;transform:scaleY(1.03);transform-origin:0 18.83px;white-space:nowrap;">Central Mobility Associate</div>
<div class="r" style="left:0.00px;top:1442.22px;width:1861.00px;height:1.80px;background:#4e4f4f;"></div>
<svg class="i" style="left:40.15px;top:1368.57px;width:36.70px;height:36.70px;" viewBox="0 0 24 24"><path fill="rgba(255,255,255,0.5)" d="M6 10c-1.1 0-2 .9-2 2s.9 2 2 2 2-.9 2-2-.9-2-2-2zm12 0c-1.1 0-2 .9-2 2s.9 2 2 2 2-.9 2-2-.9-2-2-2zm-6 0c-1.1 0-2 .9-2 2s.9 2 2 2 2-.9 2-2-.9-2-2-2z"/></svg>
<svg class="i" style="left:146.15px;top:1368.67px;width:36.70px;height:36.70px;" viewBox="0 0 24 24"><path fill="#fff" d="M16.59 8.59 12 13.17 7.41 8.59 6 10l6 6 6-6z"/></svg>
<svg class="i" style="left:232.10px;top:1367.52px;width:37.60px;height:37.60px;" viewBox="0 0 24 24"><path fill="rgba(255,255,255,0.7)" d="M19 5v14H5V5h14m0-2H5c-1.11 0-2 .9-2 2v14c0 1.1.89 2 2 2h14c1.1 0 2-.9 2-2V5c0-1.1-.9-2-2-2z"/></svg>
<svg class="i" style="left:329.20px;top:1362.82px;width:47.0px;height:47.0px" viewBox="0 0 48 48"><defs><clipPath id="c9"><circle cx="24" cy="24" r="24"/></clipPath></defs><g clip-path="url(#c9)"><rect width="48" height="48" fill="#1a1a1a"/><polygon points="1.4,10 8.3,8 7,24 1.4,24" fill="#e8c0a8"/><polygon points="0.7,25.6 11.8,19.7 17,25.6 22.2,48 0,48" fill="#9a9a9a"/><polygon points="25.6,20.4 37.7,23.2 39.5,46.4 25.6,48" fill="#9a9a9a"/><polygon points="17,26.6 23.2,26.6 20.4,41.2" fill="#f4f4f4"/><ellipse cx="20" cy="16" rx="6" ry="9" fill="#a05a30"/><polygon points="35,8 39,8 37,22 34,22" fill="#8a4a20"/><polygon points="40,31 46,31 41,42" fill="#b06a38"/><circle cx="11" cy="19" r="1.5" fill="#d02020"/></g></svg>
<div class="t" style="left:400.02px;top:1367.66px;font-size:25.35px;line-height:25.35px;color:#fff;transform:scaleY(1.042);transform-origin:0 21.46px;">Daisy Hane</div>
<div class="t" style="left:719.06px;top:1375.94px;font-size:22.07px;line-height:22.07px;color:#fff;transform:scaleY(1.03);transform-origin:0 18.68px;">Alverta7@hotmail.com</div>
<div class="r" style="left:1183.00px;top:1364.87px;width:108.20px;height:44.10px;background:#d32f2f;border-radius:6.4px;"></div>
<div class="t" style="left:1189.26px;top:1376.08px;font-size:21.9px;line-height:21.9px;color:#fff;transform:scaleY(1.03);transform-origin:0 18.54px;">$25,394</div>
<div class="t" style="left:1553.97px;top:1375.69px;font-size:22.25px;line-height:22.25px;color:#fff;transform:scaleY(1.03);transform-origin:0 18.83px;white-space:nowrap;">National Configuration Manager</div>
<div class="r" style="left:0.00px;top:1444.20px;width:1861.00px;height:18.50px;background:#262626;"></div>
<div class="r" style="left:0.00px;top:1444.50px;width:1472.00px;height:17.70px;background:#9e9e9e;border-radius:9px;"></div>
<div class="r" style="left:0.00px;top:1462.70px;width:1861.00px;height:85.30px;background:#08131a;"></div>
<div class="t" style="left:25.12px;top:1492.00px;font-size:25.4px;line-height:25.4px;color:#c6e3f7;transform:scaleY(1.042);transform-origin:0 21.50px;">2 of 128 row(s) selected</div>
<div class="t" style="left:1203.07px;top:1491.52px;font-size:22.3px;line-height:22.3px;color:#fff;transform:scaleY(1.06);transform-origin:0 18.88px;">Rows per page</div>
<div class="t" style="left:1376.12px;top:1491.78px;font-size:22.0px;line-height:22.0px;color:#fff;transform:scaleY(1.06);transform-origin:0 18.62px;">10</div>
<svg class="i" style="left:1398.40px;top:1482.30px;width:39.80px;height:39.80px;" viewBox="0 0 24 24"><path fill="#fff" d="M7 10l5 5 5-5z"/></svg>
<div class="t" style="left:1464.73px;top:1491.86px;font-size:21.9px;line-height:21.9px;color:#fff;transform:scaleY(1.06);transform-origin:0 18.54px;">1-10 of 128</div>
<svg class="i" style="left:1620.50px;top:1483.30px;width:38.40px;height:38.40px;" viewBox="0 0 24 24"><path fill="rgba(255,255,255,0.3)" d="M18.41 16.59 13.82 12l4.59-4.59L17 6l-6 6 6 6zM6 6h2v12H6z"/></svg>
<svg class="i" style="left:1682.30px;top:1483.30px;width:38.40px;height:38.40px;" viewBox="0 0 24 24"><path fill="rgba(255,255,255,0.3)" d="M15.41 7.41 14 6l-6 6 6 6 1.41-1.41L10.83 12z"/></svg>
<svg class="i" style="left:1744.00px;top:1483.30px;width:38.40px;height:38.40px;" viewBox="0 0 24 24"><path fill="#fff" d="M10 6 8.59 7.41 13.17 12l-4.58 4.59L10 18l6-6z"/></svg>
<svg class="i" style="left:1806.30px;top:1483.30px;width:38.40px;height:38.40px;" viewBox="0 0 24 24"><path fill="#fff" d="M5.59 7.41 10.18 12l-4.59 4.59L7 18l6-6-6-6zM16 6h2v12h-2z"/></svg>
</div>
<div id="bot"><div></div></div>
</body></html>
